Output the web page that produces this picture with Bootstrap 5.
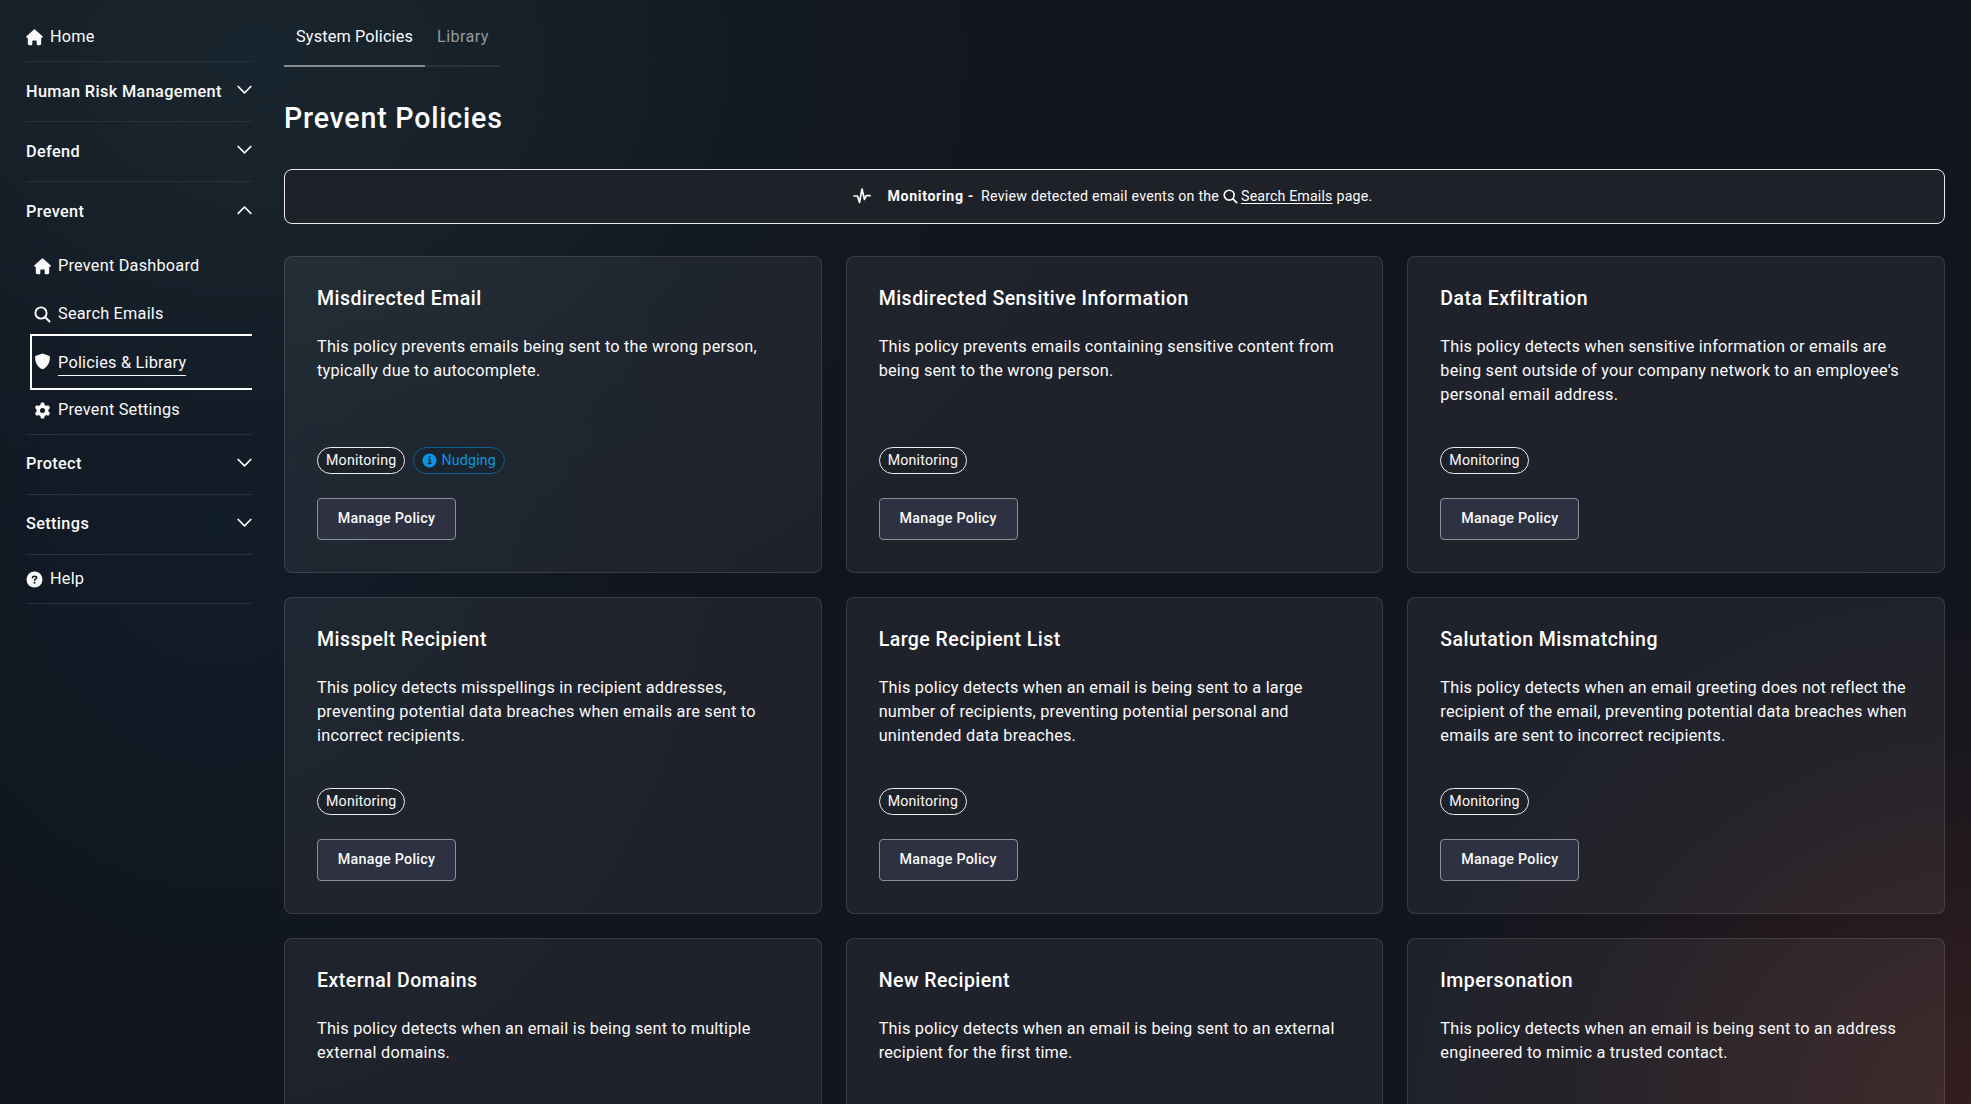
<!DOCTYPE html>
<html lang="en" data-bs-theme="dark">
<head>
<meta charset="utf-8">
<meta name="viewport" content="width=device-width, initial-scale=1">
<title>Prevent Policies</title>
<link href="https://cdn.jsdelivr.net/npm/bootstrap@5.3.0/dist/css/bootstrap.min.css" rel="stylesheet">
<style>
html, body { height: 100%; overflow: hidden; }
body {
  font-family: Roboto, "Liberation Sans", sans-serif;
  font-size: 16.3px; line-height: 24px; letter-spacing: .22px; color: #fafafa;
  background:
    radial-gradient(ellipse 620px 560px at 101% 101%, rgba(66,34,32,.75) 0%, rgba(58,31,30,.55) 35%, rgba(46,27,28,.26) 68%, rgba(17,21,30,0) 100%),
    radial-gradient(ellipse 860px 640px at 260px 60px, rgba(25,37,46,1) 0%, rgba(24,35,44,.82) 30%, rgba(20,29,39,.42) 60%, rgba(17,21,30,0) 100%),
    radial-gradient(ellipse 520px 620px at 220px 520px, rgba(16,31,43,.8) 0%, rgba(17,28,39,.45) 50%, rgba(17,21,30,0) 100%),
    #11151e;
}
svg { display: block; flex: none; }
a { color: inherit; text-decoration: none; }

.side { width: 252px; padding-left: 26px; }
.side-row { height: 60px; border-bottom: 1px solid #28323b; }
.side-head { font-weight: 500; letter-spacing: .36px; }
.side-head svg { margin-bottom: 3px; }
.side-home { height: 62px; padding-top: 13px; }
.side-open { height: 59px; border-bottom: 0; }
.side-late { padding-bottom: 1px; }
.side-late svg { margin-bottom: 2px; }
.side-help { height: 49px; }
.side-icon { gap: 7px; }
.side-sub { padding-top: 1px; border-bottom: 1px solid #28323b; }
.side-sub a { height: 48px; padding-left: 8px; }
.side-sub a.current { height: 56px; margin: -4px 0 -4px 4px; padding: 0 0 1px 2px; border: 2px solid #fff; border-right: 0; }
.current span { line-height: 25px; margin-top: 2px; border-bottom: 1px solid #fafafa; }

.main-area { padding: 0 26px 0 32px; min-width: 0; }
.tab-strip { height: 67px; }
.tab-strip a { width: 76px; padding: 25px 0 16px 12px; height: 67px; border-bottom: 2px solid #29313a; color: #95989d; letter-spacing: .36px; }
.tab-strip a.on { width: 141px; border-color: #848d92; color: #fafafa; letter-spacing: .14px; }
.page-title { font-size: 28.6px; line-height: 36px; font-weight: 500; letter-spacing: .78px; margin: 33px 0 33px; }
.notice { height: 55px; border: 1px solid #e9eaee; border-radius: 8px; background: #1f2129; font-size: 14.2px; letter-spacing: .24px; margin-bottom: 32px; padding: 0 3px 1px 0; }
.notice a { text-decoration: underline; text-underline-offset: 2px; letter-spacing: .14px; }
.notice b { letter-spacing: .65px; margin-right: 7px; }
.notice .look { margin: 0 3px 0 4px; }

.policies { --bs-gutter-x: 24px; --bs-gutter-y: 24px; }
.policy { height: 317px; padding: 32px; border: 1px solid rgba(255,255,255,.115); border-radius: 8px; background: rgba(255,255,255,.058); }
.policy h2 { font-size: 19.5px; line-height: 24px; font-weight: 500; letter-spacing: .47px; margin: -2px 0 24px; }
.policy p { height: 72px; margin: 0 -8px 40px 0; }
.tag { height: 27px; padding: 0 8px; border: 1px solid #eceef2; border-radius: 14px; background: #1f2129; font-size: 14.2px; line-height: 24px; letter-spacing: .2px; }
.tag-nudge { border-color: #0d5f92; color: #0796e4; background: #1b242d; }
.tag-nudge span { margin-bottom: 1px; }
.btn-policy { --bs-btn-color: #fafafa; --bs-btn-bg: #2d3142; --bs-btn-border-color: #8c8e98; --bs-btn-border-radius: 4px;
  width: 139px; height: 42px; margin-top: 24px; padding: 0 0 2px; font-size: 14.3px; line-height: 38px; font-weight: 500; letter-spacing: .25px; }
</style>
<script src="https://cdn.jsdelivr.net/npm/bootstrap@5.3.0/dist/js/bootstrap.bundle.min.js"></script>
</head>
<body>
<svg width="0" height="0" class="position-absolute" aria-hidden="true">
  <symbol id="i-home" viewBox="0 0 17 17"><path d="M7.700.700a1.200 1.200 0 0 1 1.600 0l7.200 6.500c.8.8.4 1.600-.5 1.600h-.8v5.700c0 1-.7 1.700-1.700 1.700h-1.900c-.6 0-.9-.3-.9-.9v-2.800c0-.7-.4-1.100-1.100-1.100H7.400c-.7 0-1.100.4-1.100 1.100v2.800c0 .6-.3.900-.9.900H3.500c-1 0-1.700-.7-1.700-1.700V8.800H1C.1 8.800-.3 8 .5 7.200z" fill="currentColor"/></symbol>
  <symbol id="i-search" viewBox="0 0 17 17"><circle cx="7" cy="7" r="5.600" fill="none" stroke="currentColor" stroke-width="1.900"/><path d="M11.200 11.200 15.500 15.500" stroke="currentColor" stroke-width="2" stroke-linecap="round"/></symbol>
  <symbol id="i-shield" viewBox="0 0 17 17"><path d="M8.500.500 15 2.800c.6.200.9.600.9 1.200 0 5.600-2.300 9.900-6.700 12.100-.5.200-.9.200-1.400 0C3.400 13.900 1.100 9.600 1.100 4c0-.6.300-1 .9-1.200z" fill="currentColor"/></symbol>
  <symbol id="i-gear" viewBox="0 0 17 17"><g fill="currentColor"><path fill-rule="evenodd" d="M8.500 2.500a6 6 0 1 0 0 12 6 6 0 0 0 0-12zm0 3.500a2.500 2.500 0 1 1 0 5 2.500 2.500 0 0 1 0-5z"/><path id="tooth" d="M6.800.800Q8.500.200 10.200.800L10.700 4H6.300z"/><use href="#tooth" transform="rotate(60 8.500 8.500)"/><use href="#tooth" transform="rotate(120 8.500 8.500)"/><use href="#tooth" transform="rotate(180 8.500 8.500)"/><use href="#tooth" transform="rotate(240 8.500 8.500)"/><use href="#tooth" transform="rotate(300 8.500 8.500)"/></g></symbol>
  <symbol id="i-help" viewBox="0 0 17 17"><circle cx="8.500" cy="8.500" r="8" fill="currentColor"/><path d="M6.400 6.800c.1-1.100 1-1.600 2.100-1.600s2.100.5 2.100 1.500c0 1.200-2 1.200-2 2.500" fill="none" stroke="#121a25" stroke-width="1.600" stroke-linecap="round"/><circle cx="8.500" cy="11.700" r="1" fill="#121a25"/></symbol>
  <symbol id="i-info" viewBox="0 0 15 15"><circle cx="7.500" cy="7.500" r="7" fill="currentColor"/><path d="M6 6.600h1.900v3.800M5.600 10.500h3.900" fill="none" stroke="#1b242d" stroke-width="1.400"/><circle cx="7.500" cy="4.200" r="1.050" fill="#1b242d"/></symbol>
  <symbol id="i-down" viewBox="0 0 15 10"><path d="M1.200 1.500 7.500 7.800 13.800 1.500" fill="none" stroke="currentColor" stroke-width="1.700" stroke-linecap="round" stroke-linejoin="round"/></symbol>
  <symbol id="i-up" viewBox="0 0 15 10"><path d="M1.200 8.300 7.500 2 13.800 8.300" fill="none" stroke="currentColor" stroke-width="1.700" stroke-linecap="round" stroke-linejoin="round"/></symbol>
  <symbol id="i-pulse" viewBox="0 0 18 18"><path d="M1 9H4.500L6.500 15.500 9 2 11.500 12.500 13.200 8.700H17" fill="none" stroke="currentColor" stroke-width="1.700" stroke-linecap="round" stroke-linejoin="round"/></symbol>
</svg>

<div class="d-flex h-100">
  <nav class="side flex-shrink-0">
    <a href="#" class="side-row side-home side-icon d-flex align-items-center"><svg width="17" height="17"><use href="#i-home"/></svg><span>Home</span></a>
    <a href="#" class="side-row side-head d-flex align-items-center justify-content-between">Human Risk Management<svg width="15" height="10"><use href="#i-down"/></svg></a>
    <a href="#" class="side-row side-head d-flex align-items-center justify-content-between">Defend<svg width="15" height="10"><use href="#i-down"/></svg></a>
    <a href="#" class="side-row side-head side-open d-flex align-items-center justify-content-between">Prevent<svg width="15" height="10"><use href="#i-up"/></svg></a>
    <div class="side-sub">
      <a href="#" class="side-icon d-flex align-items-center"><svg width="17" height="17"><use href="#i-home"/></svg><span>Prevent Dashboard</span></a>
      <a href="#" class="side-icon d-flex align-items-center"><svg width="17" height="17"><use href="#i-search"/></svg><span>Search Emails</span></a>
      <a href="#" class="side-icon current d-flex align-items-center"><svg width="17" height="17"><use href="#i-shield"/></svg><span>Policies &amp; Library</span></a>
      <a href="#" class="side-icon d-flex align-items-center"><svg width="17" height="17"><use href="#i-gear"/></svg><span>Prevent Settings</span></a>
    </div>
    <a href="#" class="side-row side-head side-late d-flex align-items-center justify-content-between">Protect<svg width="15" height="10"><use href="#i-down"/></svg></a>
    <a href="#" class="side-row side-head side-late d-flex align-items-center justify-content-between">Settings<svg width="15" height="10"><use href="#i-down"/></svg></a>
    <a href="#" class="side-row side-help side-icon d-flex align-items-center"><svg width="17" height="17"><use href="#i-help"/></svg><span>Help</span></a>
  </nav>

  <main class="main-area flex-grow-1">
    <div class="tab-strip d-flex">
      <a href="#" class="on">System Policies</a>
      <a href="#">Library</a>
    </div>
    <h1 class="page-title">Prevent Policies</h1>
    <div class="notice d-flex align-items-center justify-content-center">
      <svg width="18" height="18" class="me-3"><use href="#i-pulse"/></svg>
      <b>Monitoring -</b><span>Review detected email events on the</span>
      <svg width="15" height="15" class="look"><use href="#i-search"/></svg><a href="#">Search Emails</a><span class="ms-1">page.</span>
    </div>

    <div class="row row-cols-3 policies">
      <div class="col"><article class="policy">
        <h2>Misdirected Email</h2>
        <p>This policy prevents emails being sent to the wrong person,<br>typically due to autocomplete.</p>
        <div class="d-flex gap-2"><span class="tag">Monitoring</span><span class="tag tag-nudge d-flex align-items-center gap-1"><svg width="15" height="15"><use href="#i-info"/></svg><span>Nudging</span></span></div>
        <button type="button" class="btn btn-policy">Manage Policy</button>
      </article></div>
      <div class="col"><article class="policy">
        <h2>Misdirected Sensitive Information</h2>
        <p>This policy prevents emails containing sensitive content from<br>being sent to the wrong person.</p>
        <div class="d-flex gap-2"><span class="tag">Monitoring</span></div>
        <button type="button" class="btn btn-policy">Manage Policy</button>
      </article></div>
      <div class="col"><article class="policy">
        <h2>Data Exfiltration</h2>
        <p>This policy detects when sensitive information or emails are<br>being sent outside of your company network to an employee's<br>personal email address.</p>
        <div class="d-flex gap-2"><span class="tag">Monitoring</span></div>
        <button type="button" class="btn btn-policy">Manage Policy</button>
      </article></div>
      <div class="col"><article class="policy">
        <h2>Misspelt Recipient</h2>
        <p>This policy detects misspellings in recipient addresses,<br>preventing potential data breaches when emails are sent to<br>incorrect recipients.</p>
        <div class="d-flex gap-2"><span class="tag">Monitoring</span></div>
        <button type="button" class="btn btn-policy">Manage Policy</button>
      </article></div>
      <div class="col"><article class="policy">
        <h2>Large Recipient List</h2>
        <p>This policy detects when an email is being sent to a large<br>number of recipients, preventing potential personal and<br>unintended data breaches.</p>
        <div class="d-flex gap-2"><span class="tag">Monitoring</span></div>
        <button type="button" class="btn btn-policy">Manage Policy</button>
      </article></div>
      <div class="col"><article class="policy">
        <h2>Salutation Mismatching</h2>
        <p>This policy detects when an email greeting does not reflect the<br>recipient of the email, preventing potential data breaches when<br>emails are sent to incorrect recipients.</p>
        <div class="d-flex gap-2"><span class="tag">Monitoring</span></div>
        <button type="button" class="btn btn-policy">Manage Policy</button>
      </article></div>
      <div class="col"><article class="policy">
        <h2>External Domains</h2>
        <p>This policy detects when an email is being sent to multiple<br>external domains.</p>
      </article></div>
      <div class="col"><article class="policy">
        <h2>New Recipient</h2>
        <p>This policy detects when an email is being sent to an external<br>recipient for the first time.</p>
      </article></div>
      <div class="col"><article class="policy">
        <h2>Impersonation</h2>
        <p>This policy detects when an email is being sent to an address<br>engineered to mimic a trusted contact.</p>
      </article></div>
    </div>
  </main>
</div>
</body>
</html>
